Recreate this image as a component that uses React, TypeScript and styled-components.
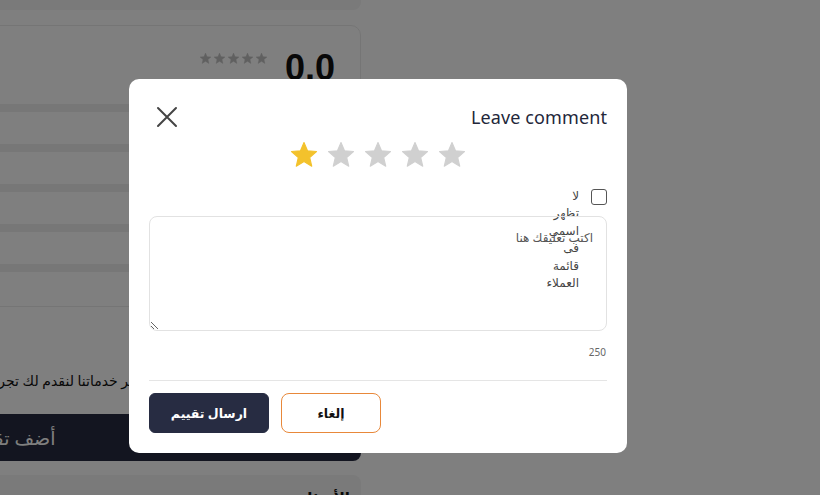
import React from "react";
import styled, { createGlobalStyle } from "styled-components";

const GlobalStyle = createGlobalStyle`
  html, body {
    margin: 0;
    padding: 0;
  }
  body {
    background: #ffffff;
    font-family: "Noto Sans", "DejaVu Sans", sans-serif;
    overflow: hidden;
  }
  *, *::before, *::after {
    box-sizing: border-box;
  }
`;

/* ---------- page behind the dialog ---------- */

const Page = styled.div`
  width: 820px;
  height: 495px;
  overflow: hidden;
`;

const Column = styled.main`
  width: 696px;
  margin-left: -335px;
  direction: rtl;
  display: flex;
  flex-direction: column;
`;

const TopStrip = styled.div`
  height: 10px;
  background: #f4f4f4;
  border-radius: 0 0 8px 8px;
`;

const ReviewsCard = styled.section`
  margin-top: 15px;
  height: 282px;
  border: 1px solid #ebebeb;
  border-radius: 10px;
  display: flex;
  flex-direction: column;
`;

const Summary = styled.div`
  height: 78px;
  padding: 24px 25px 0 0;
  display: flex;
  align-items: flex-start;
  gap: 17px;
`;

const Score = styled.div`
  font-family: "Liberation Sans", Arial, sans-serif;
  font-weight: 700;
  font-size: 36px;
  line-height: 1;
  color: #111111;
`;

const MiniStars = styled.div`
  margin-top: 2px;
  display: flex;
  gap: 1px;
  direction: ltr;
`;

const Bars = styled.div`
  display: flex;
  flex-direction: column;
  gap: 32px;
`;

const Bar = styled.div`
  height: 8px;
  margin-right: 40px;
  background: #eeeeee;
`;

const Intro = styled.p`
  margin: 63px 68px 0 0;
  font-size: 14px;
  line-height: 22px;
  color: #111111;
  white-space: nowrap;
`;

const AddReview = styled.div`
  margin-top: 22px;
  height: 47px;
  border-radius: 8px;
  background: #262b40;
  color: #ffffff;
  font-size: 19px;
  display: flex;
  align-items: center;
  justify-content: center;
`;

const FaqCard = styled.section`
  margin-top: 14px;
  height: 60px;
  border-radius: 8px;
  background: #f5f5f5;
  padding: 12px 11px;
  font-size: 15px;
  font-weight: 700;
  color: #111111;
`;

/* ---------- dialog ---------- */

const Overlay = styled.div`
  position: fixed;
  inset: 0;
  background: rgba(0, 0, 0, 0.5);
`;

const Dialog = styled.div`
  position: absolute;
  left: 129px;
  top: 79px;
  width: 498px;
  background: #ffffff;
  border-radius: 10px;
  padding: 24px 20px 20px;
  display: flex;
  flex-direction: column;
`;

const Header = styled.div`
  height: 28px;
  display: flex;
  align-items: center;
  justify-content: space-between;
`;

const CloseButton = styled.button`
  width: 22px;
  height: 22px;
  margin-left: 7px;
  padding: 0;
  border: none;
  background: none;
  display: flex;
  cursor: pointer;
`;

const Title = styled.h2`
  margin: 0;
  font-size: 18px;
  font-weight: 400;
  color: #23273a;
  letter-spacing: 0.1px;
`;

const StarRow = styled.div`
  margin-top: 9px;
  height: 30px;
  display: flex;
  justify-content: center;
  gap: 7px;
`;

const CheckRow = styled.label`
  margin-top: 17px;
  height: 19px;
  direction: rtl;
  display: flex;
  align-items: flex-start;
  gap: 12px;
`;

const Check = styled.input`
  appearance: none;
  margin: 2px 0 0 0;
  width: 16px;
  height: 16px;
  border: 1.5px solid #555555;
  border-radius: 3px;
  background: #ffffff;
`;

const CheckText = styled.span`
  width: 26px;
  height: 19px;
  font-size: 12px;
  line-height: 17.4px;
  color: #444444;
  overflow: visible;
`;

const CommentBox = styled.textarea`
  margin-top: 10px;
  height: 115px;
  padding: 12px 13px;
  border: 1px solid #e2e2e2;
  border-radius: 8px;
  background: transparent;
  font-family: inherit;
  font-size: 12px;
  line-height: 17px;
  color: #333333;
  resize: vertical;
  outline: none;

  &::placeholder {
    color: #555555;
  }
`;

const Counter = styled.div`
  margin-top: 15px;
  font-size: 10px;
  line-height: 12px;
  color: #666666;
  text-align: right;
  padding-right: 1px;
`;

const Divider = styled.hr`
  margin: 22px 0 0;
  border: none;
  border-top: 1px solid #e5e5e5;
`;

const Footer = styled.div`
  margin-top: 12px;
  display: flex;
  gap: 12px;
`;

const ActionButton = styled.button<{ $primary?: boolean }>`
  height: 40px;
  width: ${(p) => (p.$primary ? "120px" : "100px")};
  border-radius: ${(p) => (p.$primary ? "6px" : "8px")};
  border: 1px solid ${(p) => (p.$primary ? "#272c42" : "#e8883a")};
  background: ${(p) => (p.$primary ? "#272c42" : "#ffffff")};
  color: ${(p) => (p.$primary ? "#ffffff" : "#111111")};
  font-family: inherit;
  font-size: 12.5px;
  font-weight: 700;
  cursor: pointer;
`;

const STAR_PATH =
  "M12 17.27L18.18 21l-1.64-7.03L22 9.24l-7.19-.61L12 2 9.19 8.63 2 9.24l5.46 4.73L5.82 21z";

function Star({ size, color }: { size: number; color: string }) {
  return (
    <svg width={size} height={size} viewBox="0 0 24 24">
      <path
        d={STAR_PATH}
        fill={color}
        stroke={color}
        strokeWidth={0.9}
        strokeLinejoin="round"
      />
    </svg>
  );
}

function CloseIcon() {
  return (
    <svg width="22" height="22" viewBox="0 0 22 22">
      <path
        d="M2 2 L20 20 M20 2 L2 20"
        stroke="#444444"
        strokeWidth="2"
        strokeLinecap="round"
        fill="none"
      />
    </svg>
  );
}

export default function App() {
  const rating = 1;
  return (
    <>
      <GlobalStyle />
      <Page>
        <Column>
          <TopStrip />
          <ReviewsCard>
            <Summary>
              <Score>0.0</Score>
              <MiniStars>
                {[0, 1, 2, 3, 4].map((i) => (
                  <Star key={i} size={13} color="#c0c0c0" />
                ))}
              </MiniStars>
            </Summary>
            <Bars>
              {[5, 4, 3, 2, 1].map((n) => (
                <Bar key={n} />
              ))}
            </Bars>
          </ReviewsCard>
          <Intro>شاركنا رأيك لنعمل على تطوير خدماتنا لنقدم لك تجربة أفضل دائماً</Intro>
          <AddReview>أضف تقييم</AddReview>
          <FaqCard>الأسئلة</FaqCard>
        </Column>
      </Page>

      <Overlay>
        <Dialog role="dialog" aria-label="Leave comment">
          <Header>
            <CloseButton aria-label="close">
              <CloseIcon />
            </CloseButton>
            <Title>Leave comment</Title>
          </Header>

          <StarRow>
            {[1, 2, 3, 4, 5].map((n) => (
              <Star key={n} size={30} color={n <= rating ? "#f3c22c" : "#d0d0d0"} />
            ))}
          </StarRow>

          <CheckRow>
            <Check type="checkbox" />
            <CheckText>لا تظهر اسمي فى قائمة العملاء</CheckText>
          </CheckRow>

          <CommentBox dir="rtl" placeholder="اكتب تعليقك هنا" />
          <Counter>250</Counter>

          <Divider />

          <Footer>
            <ActionButton $primary>ارسال تقييم</ActionButton>
            <ActionButton>إلغاء</ActionButton>
          </Footer>
        </Dialog>
      </Overlay>
    </>
  );
}
